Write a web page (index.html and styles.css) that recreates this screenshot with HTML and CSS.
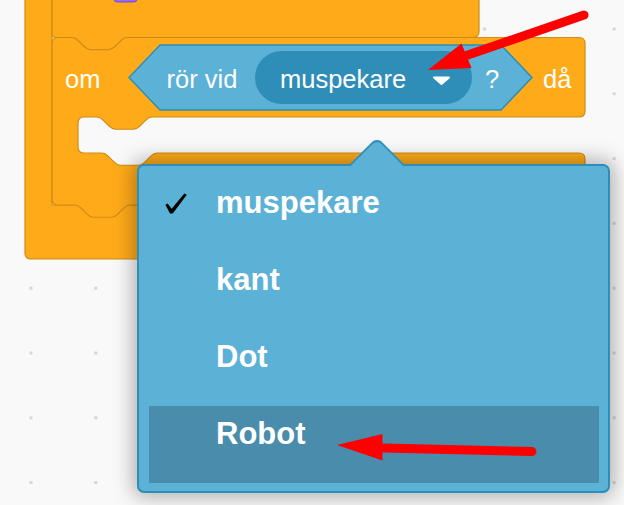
FILE: index.html
```html
<!DOCTYPE html>
<html lang="sv">
<head>
<meta charset="utf-8">
<title>Scratch – rör vid</title>
<link rel="stylesheet" href="styles.css">
</head>
<body>
<div class="stage">
  <svg class="blocks" width="624" height="505" viewBox="0 0 624 505">
    <path class="blk" d="M25,-10 H52 V205 H400 V253 Q400,259 394,259 H31 Q25,259 25,253 Z"/>
    <path class="blk" d="M52,-10 V33.5 Q52,37.5 56,37.5 H72 c3.06,0 4.59,1.53 6.12,3.06 l6.12,6.12 c1.53,1.53 3.06,3.06 6.12,3.06 h18.36 c3.06,0 4.59,-1.53 6.12,-3.06 l6.12,-6.12 c1.53,-1.53 3.06,-3.06 6.12,-3.06 H473 Q479,37.5 479,31.5 V-10 Z"/>
    <rect x="114" y="-10" width="23" height="12" rx="3" fill="#9966ff" stroke="#774dcb"/>
    <path class="blk" d="M52,43.5 Q52,37.5 58,37.5 H72 c3.06,0 4.59,1.53 6.12,3.06 l6.12,6.12 c1.53,1.53 3.06,3.06 6.12,3.06 h18.36 c3.06,0 4.59,-1.53 6.12,-3.06 l6.12,-6.12 c1.53,-1.53 3.06,-3.06 6.12,-3.06 H579 Q585,37.5 585,43.5 V111 Q585,117 579,117 H152 c-3.06,0 -4.59,1.53 -6.12,3.06 l-6.12,6.12 c-1.53,1.53 -3.06,3.06 -6.12,3.06 h-18.36 c-3.06,0 -4.59,-1.53 -6.12,-3.06 l-6.12,-6.12 c-1.53,-1.53 -3.06,-3.06 -6.12,-3.06 H84 Q78,117 78,123 V147 Q78,153 84,153 H102 c3.06,0 4.59,1.53 6.12,3.06 l6.12,6.12 c1.53,1.53 3.06,3.06 6.12,3.06 h18.36 c3.06,0 4.59,-1.53 6.12,-3.06 l6.12,-6.12 c1.53,-1.53 3.06,-3.06 6.12,-3.06 H579 Q585,153 585,159 V199 Q585,205 579,205 H130 c-3.06,0 -4.59,1.53 -6.12,3.06 l-6.12,6.12 c-1.53,1.53 -3.06,3.06 -6.12,3.06 h-18.36 c-3.06,0 -4.59,-1.530 -6.12,-3.06 l-6.12,-6.12 c-1.53,-1.53 -3.06,-3.06 -6.12,-3.06 H58 Q52,205 52,199 Z"/>
    <path class="bool" d="M129,77.5 L160,45 H501 L532,77.5 L501,110 H160 Z"/>
    <rect class="field" x="255" y="51" width="217" height="53" rx="26.5"/>
    <path class="caret" d="M434,77.5 H449 L441.5,84 Z"/>
    <text class="blk-text" x="65" y="87.5">om</text>
    <text class="blk-text" x="166.5" y="87.5">rör vid</text>
    <text class="blk-text" x="280" y="87.5">muspekare</text>
    <text class="blk-text" x="485" y="87.5">?</text>
    <text class="blk-text" x="543" y="87.5">då</text>
  </svg>

  <div class="menu">
    <div class="menu-arrow"></div>
    <ul class="menu-list">
      <li class="item is-selected">
        <span class="check"><svg width="22" height="21" viewBox="0 0 22 21"><path d="M0.4,11.8 L2.6,10.4 L6.6,15.8 L19.4,0.4 L21.8,1.8 L7.8,20.6 L5,20.6 Z" fill="#000"/></svg></span>
        <span class="label">muspekare</span>
      </li>
      <li class="item"><span class="label">kant</span></li>
      <li class="item"><span class="label">Dot</span></li>
      <li class="item is-hover"><span class="label">Robot</span></li>
    </ul>
  </div>

  <svg class="annotations" width="624" height="505" viewBox="0 0 624 505">
    <line x1="584" y1="15" x2="462" y2="57" class="ann-line"/>
    <polygon points="428,70 461.5,43.5 471.5,68" class="ann-head"/>
    <line x1="384" y1="448" x2="532" y2="451.5" class="ann-line"/>
    <polygon points="337,445 382.5,434 382.5,460.5" class="ann-head"/>
  </svg>
</div>
</body>
</html>
```

FILE: styles.css
```css
html, body {
  margin: 0;
  padding: 0;
}

body {
  background: #f9f9f9;
  font-family: "Liberation Sans", Arial, sans-serif;
}

.stage {
  position: relative;
  width: 624px;
  height: 505px;
  overflow: hidden;
  background-color: #f9f9f9;
  background-image: radial-gradient(circle at center, #d4d4d4 0, #d4d4d4 1.3px, rgba(249,249,249,0) 2px);
  background-size: 64.8px 64.8px;
  background-position: -1.4px -3.4px;
}

.blocks,
.annotations {
  position: absolute;
  left: 0;
  top: 0;
  display: block;
}

.annotations {
  z-index: 5;
  pointer-events: none;
}

.blk {
  fill: #ffab19;
  stroke: #cf8b17;
  stroke-width: 1.2;
  stroke-linejoin: round;
}

.bool {
  fill: #5cb1d6;
  stroke: #2e8eb8;
  stroke-width: 1.5;
  stroke-linejoin: round;
}

.field {
  fill: #2e8eb8;
}

.caret {
  fill: #fff;
  stroke: #fff;
  stroke-width: 2;
  stroke-linejoin: round;
}

.blk-text {
  font-family: "Liberation Sans", Arial, sans-serif;
  font-size: 25.5px;
  fill: #fff;
}

.ann-line {
  stroke: #ff0000;
  stroke-width: 9;
  stroke-linecap: round;
}

.ann-head {
  fill: #ff0000;
}

.menu {
  position: absolute;
  left: 137px;
  top: 164px;
  width: 473px;
  height: 329px;
  box-sizing: border-box;
  background: #5cb1d6;
  border: 2px solid #2e8eb8;
  border-radius: 7px;
  box-shadow: 0 0 20px 4px rgba(0, 0, 0, 0.3);
  padding: 9px 9px 8px 10px;
  z-index: 2;
}

.menu-arrow {
  position: absolute;
  left: 217.5px;
  top: -21px;
  width: 40px;
  height: 40px;
  box-sizing: border-box;
  background: #5cb1d6;
  border-top: 2px solid #2e8eb8;
  border-left: 2px solid #2e8eb8;
  border-top-left-radius: 8px;
  transform: rotate(45deg);
}

.menu-list {
  position: relative;
  z-index: 1;
  list-style: none;
  margin: 0;
  padding: 0;
}

.item {
  display: grid;
  grid-template-columns: 67px 1fr;
  align-items: start;
  height: 77px;
  box-sizing: border-box;
  padding-top: 10px;
  color: #fff;
  font-size: 31px;
  font-weight: bold;
  line-height: 36px;
}

.item.is-hover {
  background: #4a8cab;
}

.check {
  grid-column: 1;
  margin-left: 16px;
  margin-top: 8px;
  height: 21px;
}

.check svg {
  display: block;
}

.label {
  grid-column: 2;
}
```
